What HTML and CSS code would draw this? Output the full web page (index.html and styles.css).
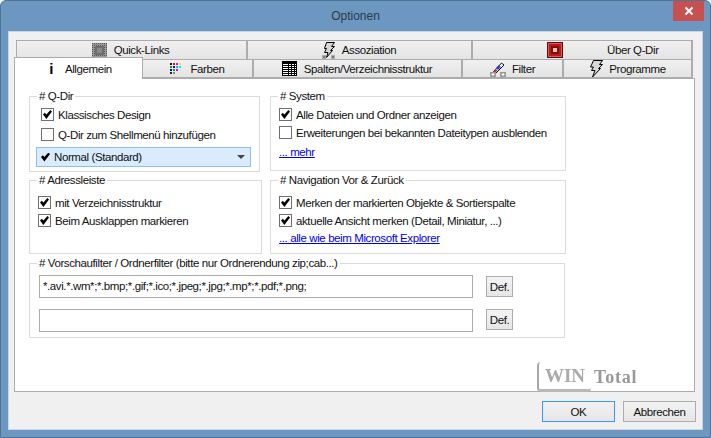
FILE: index.html
```html
<!DOCTYPE html>
<html lang="de">
<head>
<meta charset="utf-8">
<title>Optionen</title>
<link rel="stylesheet" href="styles.css">
</head>
<body>
<div class="window">
  <header class="titlebar">
    <h1 class="title">Optionen</h1>
    <button class="close" aria-label="Schließen"><svg width="10" height="10" viewBox="0 0 10 10"><path d="M1.5 1.5l7 7M8.5 1.5l-7 7" stroke="#fff" stroke-width="2"/></svg></button>
  </header>
  <div class="client">
    <div class="tabs">
      <div class="tabrow tabrow-top">
        <div class="tab t-quick"><svg class="ico" width="15" height="15" viewBox="0 0 15 15"><defs><pattern id="dots" width="2" height="2" patternUnits="userSpaceOnUse"><rect width="2" height="2" fill="#9a9a9a"/><rect width="1" height="1" fill="#555"/></pattern></defs><rect width="15" height="15" fill="url(#dots)"/><rect x="3" y="3" width="9" height="9" fill="#6e6e6e"/><rect x="5" y="5" width="5" height="5" fill="#8a8a8a"/></svg><span>Quick-Links</span></div>
        <div class="tab t-assoc"><svg class="ico" width="15" height="17" viewBox="0 0 15 17"><path d="M1 15h4M3 13v4M10 15h4M12 13v4M1.500 13.500l3 3M4.500 13.500l-3 3M10.500 13.500l3 3M13.500 13.500l-3 3" stroke="#777"/><path d="M5.500 .5h8l-3 4h3l-4 4h2l-6 7 1.500-5H3.500l2-4h-2z" fill="#d8d8d8" stroke="#000"/></svg><span>Assoziation</span></div>
        <div class="tab t-about"><svg class="ico" width="16" height="16" viewBox="0 0 16 16"><rect width="16" height="16" fill="#5e0d0d"/><rect x="1.500" y="1.500" width="13" height="13" fill="#c81414" stroke="#f6b5b5" stroke-dasharray="1 1"/><rect x="4" y="4" width="8" height="8" fill="#7a1010"/><rect x="6" y="6" width="4" height="4" fill="#f4c0c0"/></svg><span class="about-label">Über Q-Dir</span></div>
      </div>
      <div class="tabrow tabrow-bottom">
        <div class="tab active t-general"><b class="info">i</b><span>Allgemein</span></div>
        <div class="tab t-colors"><svg class="ico" width="12" height="12" viewBox="0 0 12 12"><path d="M0 0h2v2H0z" fill="#111"/><path d="M3 0h2v2H3z" fill="#e00"/><path d="M6 0h2v2H6z" fill="#e0e"/><path d="M9 0h2v2H9z" fill="#ee0"/><path d="M0 3h2v2H0z" fill="#0a0"/><path d="M3 3h2v2H3z" fill="#00e"/><path d="M6 3h2v2H6z" fill="#0cc"/><path d="M9 3h2v2H9z" fill="#0ee"/><path d="M0 6h2v2H0z" fill="#00c"/><path d="M3 6h2v2H3z" fill="#0a0"/><path d="M6 6h2v2H6z" fill="#e0e"/><path d="M0 9h2v2H0z" fill="#222"/><path d="M3 9h2v2H3z" fill="#888"/></svg><span>Farben</span></div>
        <div class="tab t-columns"><svg class="ico" width="15" height="15" viewBox="0 0 15 15"><rect width="15" height="15" fill="#000"/><path d="M1 3h13v1H1zM1 5h13v1H1zM1 7h13v1H1zM1 9h13v1H1zM1 11h13v1H1zM1 13h13v1H1z" fill="#fff"/><path d="M6 2h1v13H6zM9 2h1v13H9zM12 2h1v13h-1z" fill="#000"/></svg><span>Spalten/Verzeichnisstruktur</span></div>
        <div class="tab t-filter"><svg class="ico" width="16" height="17" viewBox="0 0 16 17"><path d="M3.500 11.500l8-8.500 2.500 2-8 8-3.500 1z" fill="#fff" stroke="#111"/><path d="M6 8l3-3 2 2-3 3z" fill="#2747d0"/><path d="M3.500 11.500L6 9l1.500 1.500L5 13z" fill="#d8304a"/><rect y="12" width="6" height="5" fill="#9a9a9a"/><rect x="10" y="12" width="6" height="5" fill="#9a9a9a"/><path d="M3 13v3M1.500 14.500h3M13 13v3M11.500 14.500h3" stroke="#fff"/></svg><span>Filter</span></div>
        <div class="tab t-programs"><svg class="ico" width="14" height="18" viewBox="0 0 14 18"><path d="M4.500 .5h9l-3 4h3l-4 4h2l-8 8.500 2.500-6.500H2.500l2-3.500h-3z" fill="#d8d8d8" stroke="#000"/></svg><span>Programme</span></div>
      </div>
    </div>
    <main class="panel">
      <div class="grouprow row-a">
        <fieldset class="group g-qdir">
          <legend># Q-Dir</legend>
          <label class="check c-design"><i class="box on"></i>Klassisches Design</label>
          <label class="check c-shell"><i class="box"></i>Q-Dir zum Shellmenü hinzufügen</label>
          <div class="combo"><span class="combo-mark"></span><span class="combo-text">Normal (Standard)</span><span class="caret"></span></div>
        </fieldset>
        <fieldset class="group g-system">
          <legend># System</legend>
          <label class="check c-all"><i class="box on"></i>Alle Dateien und Ordner anzeigen</label>
          <label class="check c-ext"><i class="box"></i>Erweiterungen bei bekannten Dateitypen ausblenden</label>
          <a class="link l-more" href="#">... mehr</a>
        </fieldset>
      </div>
      <div class="grouprow row-b">
        <fieldset class="group g-address">
          <legend># Adressleiste</legend>
          <label class="check c-tree"><i class="box on"></i>mit Verzeichnisstruktur</label>
          <label class="check c-fold"><i class="box on"></i>Beim Ausklappen markieren</label>
        </fieldset>
        <fieldset class="group g-nav">
          <legend># Navigation Vor &amp; Zurück</legend>
          <label class="check c-mark"><i class="box on"></i>Merken der markierten Objekte &amp; Sortierspalte</label>
          <label class="check c-view"><i class="box on"></i>aktuelle Ansicht merken (Detail, Miniatur, ...)</label>
          <a class="link l-explorer" href="#">... alle wie beim Microsoft Explorer</a>
        </fieldset>
      </div>
      <fieldset class="group g-filter">
        <legend># Vorschaufilter / Ordnerfilter (bitte nur Ordnerendung zip;cab...)</legend>
        <div class="filter-row row-one"><div class="input">*.avi.*.wm*;*.bmp;*.gif;*.ico;*.jpeg;*.jpg;*.mp*;*.pdf;*.png;</div><button class="def">Def.</button></div>
        <div class="filter-row row-two"><div class="input"></div><button class="def">Def.</button></div>
      </fieldset>
      <div class="watermark"><div class="wm-box">WIN</div><div class="wm-text">Total</div></div>
    </main>
    <footer class="actions">
      <button class="btn primary">OK</button>
      <button class="btn">Abbrechen</button>
    </footer>
  </div>
</div>
</body>
</html>
```
FILE: styles.css
```css
* { box-sizing: border-box; }
html, body { margin: 0; padding: 0; }
body { width: 711px; height: 438px; overflow: hidden; font: 11.5px/14px "Liberation Sans", Arial, sans-serif; letter-spacing: -.4px; color: #111; }
button { letter-spacing: inherit; }
.window { width: 711px; height: 438px; background: #6b97c1; border: 1px solid #4f7295; border-radius: 6px 6px 0 0; padding: 0 7px 7px; display: flex; flex-direction: column; }
.titlebar { height: 30px; flex: none; display: flex; justify-content: center; position: relative; }
.title { margin: 0; font: 12px/30px "Liberation Sans", sans-serif; letter-spacing: 0; color: #2a3a4a; }
.close { position: absolute; right: -1px; top: 0; width: 31px; height: 20px; padding: 0; border: 0; background: #c75050; display: flex; align-items: center; justify-content: center; }
.client { flex: 1; background: #f0f0f0; border: 1px solid #c8d6e4; display: flex; flex-direction: column; }
.tabs { padding: 8px 0 0 5px; flex: none; }
.tabrow { display: flex; height: 19px; }
.tabrow-top { margin-left: 2px; }
.tabrow-bottom { position: relative; z-index: 1; }
.tab { height: 19px; background: linear-gradient(#f0f0f0, #e4e4e4); border: 1px solid #acacac; border-width: 1px 2px 0 0; display: flex; align-items: center; justify-content: center; gap: 7px; }
.tab:first-child { border-left: 1px solid #acacac; }
.t-quick { width: 232px; padding-right: 2px; }
.t-assoc { width: 225px; gap: 6px; padding-right: 2px; }
.t-about { width: 220px; gap: 44px; justify-content: flex-start; padding-left: 74px; }
.tabrow-bottom .tab { border-bottom: 1px solid #acacac; }
.t-general { width: 129px; height: 22px; margin-top: -2px; background: #fff; border: 1px solid #acacac; gap: 12px; padding-left: 4px; }
.tabrow-bottom .t-general { border-bottom: 0; background: #fff; }
.t-colors { width: 111px; gap: 8px; border-left: 0; }
.t-columns { width: 209px; gap: 7px; padding-right: 1px; }
.t-filter { width: 101px; gap: 6px; }
.t-programs { width: 129px; gap: 6px; }
.info { font: bold 15px/14px "Liberation Sans", sans-serif; color: #000; }
.ico { flex: none; display: block; }
.panel { flex: 1; position: relative; background: #fff; border: 1px solid #acacac; margin: 0 7px 0 5px; padding: 10px 14px 0; min-height: 0; }
.grouprow { display: flex; }
.row-a { height: 84px; }
.row-b { height: 83px; }
.group { margin: 0; padding: 0; border: 1px solid #dcdcdc; min-width: 0; display: block; position: relative; }
.group legend { margin-left: 7px; padding: 0 2px; line-height: 14px; height: 14px; }
.g-qdir { width: 231px; height: 83px; margin-right: 10px; }
.g-system { width: 296px; height: 82px; }
.g-address { width: 233px; height: 81px; margin-right: 8px; }
.g-nav { width: 296px; height: 81px; }
.g-filter { width: 536px; height: 82px; }
.check { display: flex; align-items: center; height: 13px; white-space: nowrap; }
.box { width: 13px; height: 13px; flex: none; border: 1px solid #707070; background: #fff; margin-right: 4px; position: relative; }
.box.on::after, .combo-mark::after { content: ""; display: block; position: absolute; left: 1px; top: 1px; width: 9px; height: 9px; background: #000; clip-path: polygon(0 50%, 20% 30%, 38% 50%, 82% 0, 100% 18%, 38% 100%); }
.c-design { margin: 5px 0 0 11px; }
.c-shell { margin: 7px 0 0 11px; }
.combo { margin: 6px 0 0 6px; width: 215px; height: 20px; background: #d9ecfd; border: 1px solid #8ebff0; display: flex; align-items: center; padding: 0 5px 0 3px; }
.combo-mark { width: 11px; height: 11px; position: relative; flex: none; }
.combo-text { margin-left: 3px; flex: 1; }
.caret { width: 0; height: 0; border: 4px solid transparent; border-top: 4px solid #444; border-bottom: 0; }
.c-all, .c-ext { margin-left: 8px; }
.c-all { margin-top: 5px; }
.c-ext { margin-top: 5px; }
.link { display: block; color: #0000f0; text-decoration: underline; margin-left: 8px; }
.l-more { margin-top: 6px; }
.c-tree { margin: 9px 0 0 8px; }
.c-fold { margin: 5px 0 0 8px; }
.c-mark { margin: 9px 0 0 8px; }
.c-view { margin: 5px 0 0 8px; }
.l-explorer { margin-top: 4px; }
.filter-row { display: flex; margin-left: 9px; }
.row-one { margin-top: 5px; align-items: center; }
.row-two { margin-top: 11px; align-items: flex-start; }
.input { width: 434px; height: 23px; background: #fff; border: 1px solid #acacac; padding: 0 3px; line-height: 21px; white-space: nowrap; }
.def { margin-left: 13px; width: 27px; height: 21px; padding: 0; font: inherit; background: linear-gradient(#f4f4f4, #e6e6e6); border: 1px solid #acacac; color: #111; }
.watermark { position: absolute; left: 522px; top: 283px; height: 30px; display: flex; align-items: center; filter: blur(.6px); letter-spacing: 0; }
.wm-box { width: 54px; height: 30px; background: #fff; border-left: 2px solid #a8a8a8; border-bottom: 3px solid #b8b8b8; border-radius: 4px; font: bold 19px/27px "Liberation Serif", serif; color: #aaa; text-align: center; }
.wm-text { font: bold 18px/27px "Liberation Serif", serif; letter-spacing: .8px; color: #999; margin-left: 3px; }
.actions { height: 37px; flex: none; display: flex; justify-content: flex-end; gap: 8px; padding: 9px 6px 0 0; }
.btn { width: 73px; height: 21px; padding: 0; font: inherit; background: linear-gradient(#f2f2f2, #e6e6e6); border: 1px solid #acacac; color: #111; }
.btn.primary { border-color: #3399ff; }
```
